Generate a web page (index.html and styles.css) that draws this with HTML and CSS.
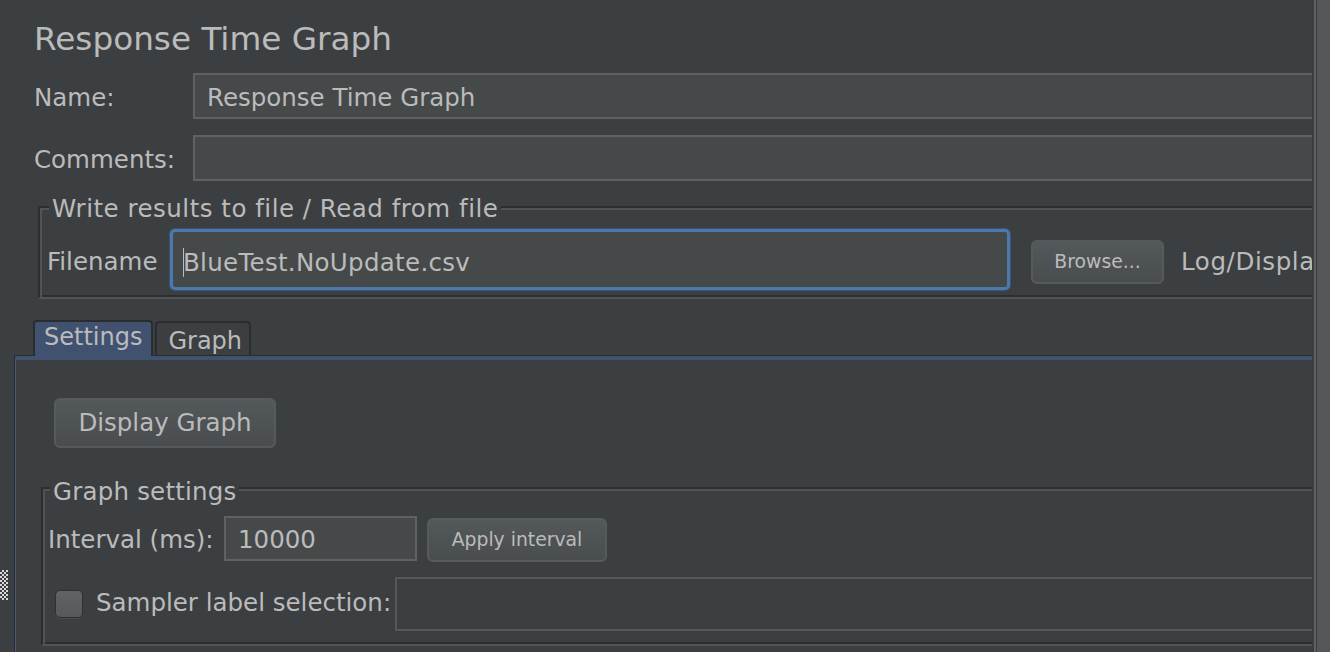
FILE: index.html
```html
<!DOCTYPE html>
<html>
<head>
<meta charset="utf-8">
<title>Response Time Graph</title>
<link rel="stylesheet" href="styles.css">
</head>
<body>
<div class="window">
  <div class="main">
    <div class="top">
      <h1 class="title">Response Time Graph</h1>
      <div class="row row-name">
        <div class="label label-name">Name:</div>
        <div class="field field-std">Response Time Graph</div>
      </div>
      <div class="row row-comments">
        <div class="label label-name">Comments:</div>
        <div class="field field-std"></div>
      </div>
      <div class="group group-file">
        <div class="legend legend-file">Write results to file / Read from file</div>
        <div class="row row-file">
          <div class="label label-file">Filename</div>
          <div class="field field-focus"><span class="caret"></span>BlueTest.NoUpdate.csv</div>
          <div class="button button-small button-browse">Browse...</div>
          <div class="label label-log">Log/Display Only:</div>
        </div>
      </div>
    </div>
    <div class="lower">
      <div class="splitter"><div class="grip"></div></div>
      <div class="tabs">
        <div class="tabstrip">
          <div class="tab tab-active">Settings</div>
          <div class="tab tab-idle">Graph</div>
        </div>
        <div class="panel">
          <div class="button button-large">Display Graph</div>
          <div class="group group-graph">
            <div class="legend legend-graph">Graph settings</div>
            <div class="row row-interval">
              <div class="label label-interval">Interval (ms):</div>
              <div class="field field-interval">10000</div>
              <div class="button button-small button-apply">Apply interval</div>
            </div>
            <div class="row row-sampler">
              <div class="checkbox"></div>
              <div class="label label-sampler">Sampler label selection:</div>
              <div class="field field-sampler"></div>
            </div>
          </div>
        </div>
      </div>
    </div>
  </div>
  <div class="gap"></div>
  <div class="rightbar"></div>
</div>
</body>
</html>
```

FILE: styles.css
```css
* { box-sizing: border-box; }

html, body {
  margin: 0;
  padding: 0;
  background: #3c3f41;
  overflow: hidden;
}

body {
  width: 1330px;
  height: 652px;
  font-family: "DejaVu Sans", "Liberation Sans", sans-serif;
  font-size: 24.5px;
  color: #bbbbbb;
}

.window {
  display: flex;
  height: 652px;
}

.main {
  width: 1312px;
  height: 652px;
  overflow: hidden;
  flex: none;
}

.gap {
  width: 2px;
  flex: none;
  background: #3a3d3f;
}

.rightbar {
  flex: 1;
  border-left: 2px solid #5e6062;
  background: linear-gradient(to right, #3a3c3e 0 1px, #565758 1px);
}

/* ---------- top area ---------- */
.top {
  padding-left: 34px;
}

.title {
  margin: 0;
  padding-top: 20px;
  font-size: 32.7px;
  font-weight: normal;
  line-height: 38px;
  color: #bbbbbb;
  white-space: nowrap;
}

.row {
  display: flex;
  align-items: flex-start;
  white-space: nowrap;
}

.label {
  line-height: 28px;
  white-space: nowrap;
  flex: none;
}

.row-name { margin-top: 15px; }
.row-comments { margin-top: 16px; }

.label-name {
  width: 159px;
  padding-top: 11px;
}

.field {
  flex: none;
  line-height: 28px;
  white-space: nowrap;
  overflow: hidden;
}

.field-std {
  width: 1200px;
  height: 46px;
  border: 2px solid #5f6162;
  background: #45494a;
  padding: 9px 12px 0;
}

/* ---------- groups ---------- */
.group {
  border-style: solid;
  border-width: 2px;
  border-color: #2c2e30 #515456 #515456 #2c2e30;
  box-shadow: inset 2px 2px 0 #515456, inset -2px -2px 0 #2c2e30;
  width: 1400px;
}

.legend {
  display: table;
  background: #3c3f41;
  line-height: 28px;
  padding: 0 3px;
  position: relative;
  white-space: nowrap;
}

.group-file {
  margin-top: 25px;
  margin-left: 4px;
  padding: 0 0 7px 7px;
}

.legend-file {
  margin: -13px 0 0 2px;
  letter-spacing: 0.5px;
}

.row-file { margin-top: 6px; }

.label-file {
  width: 123px;
  padding-top: 19px;
}

.field-focus {
  width: 840px;
  height: 61px;
  border: 3px solid #4b78ae;
  border-radius: 5px;
  box-shadow: 0 0 0 1px rgba(75, 120, 174, 0.35);
  background: #45494a;
  padding: 16px 10px 0 10px;
  letter-spacing: 0.3px;
}

.caret {
  display: inline-block;
  width: 1px;
  height: 29px;
  margin-right: -1px;
  vertical-align: -6px;
  background: #bbbbbb;
}

.button {
  flex: none;
  display: flex;
  align-items: center;
  justify-content: center;
  border: 2px solid #565a5c;
  border-radius: 6px;
  background: linear-gradient(#53585a, #494d4f);
  color: #bbbbbb;
  white-space: nowrap;
}

.button-small {
  font-size: 18.8px;
  line-height: 22px;
  height: 44px;
}

.button-browse {
  width: 133px;
  margin: 11px 0 0 21px;
}

.label-log {
  margin-left: 17px;
  padding-top: 19px;
  letter-spacing: 0.6px;
}

/* ---------- lower tabs area ---------- */
.lower {
  display: flex;
  margin-top: 21px;
}

.splitter {
  width: 14px;
  flex: none;
}

.grip {
  width: 8px;
  height: 30px;
  margin-top: 250px;
  background: repeating-conic-gradient(#d8d8d8 0 25%, #3c3f41 0 50%) 0 0 / 4px 4px;
}

.tabs {
  flex: 1;
}

.tabstrip {
  display: flex;
  align-items: flex-end;
  height: 35px;
  padding-left: 19px;
}

.tab {
  flex: none;
  line-height: 28px;
  font-size: 24px;
  border: 2px solid #2a2c2e;
  border-bottom: none;
  border-radius: 4px 4px 0 0;
  white-space: nowrap;
}

.tab-active {
  background: #415170;
  height: 36px;
  margin-bottom: -1px;
  padding: 1px 9px 0;
  position: relative;
  z-index: 1;
}

.tab-idle {
  background: #3c3f41;
  height: 34px;
  margin-left: 2px;
  padding: 4px 7px 0 11px;
}

.panel {
  border-top: 1px solid #2a2c2e;
  border-left: 1px solid #2a2c2e;
  box-shadow: inset 0 4px 0 #415170, inset 1px 0 0 #4a5a7a;
  height: 300px;
  padding-left: 39px;
  padding-top: 42px;
}

.button-large {
  width: 222px;
  height: 50px;
  line-height: 28px;
}

.group-graph {
  margin-top: 39px;
  margin-left: -13px;
  padding: 0 0 13px 5px;
}

.legend-graph {
  margin: -11px 0 0 2px;
  letter-spacing: 0.2px;
}

.row-interval { margin-top: 10px; }

.label-interval {
  width: 176px;
  padding-top: 10px;
}

.field-interval {
  width: 193px;
  height: 45px;
  border: 2px solid #5f6162;
  background: #45494a;
  padding: 8px 12px 0;
}

.button-apply {
  width: 180px;
  margin: 2px 0 0 10px;
}

.row-sampler { margin-top: 15px; }

.checkbox {
  flex: none;
  width: 28px;
  height: 28px;
  margin: 13px 0 0 7px;
  border: 1px solid #2e3032;
  border-radius: 5px;
  background: linear-gradient(#616466, #56595b);
  box-shadow: 0 1px 0 #4a4d4f;
}

.label-sampler {
  margin-left: 13px;
  padding-top: 12px;
}

.field-sampler {
  width: 1000px;
  height: 54px;
  margin-left: 4px;
  border: 2px solid #55585a;
  background: #3c3f41;
}
```
